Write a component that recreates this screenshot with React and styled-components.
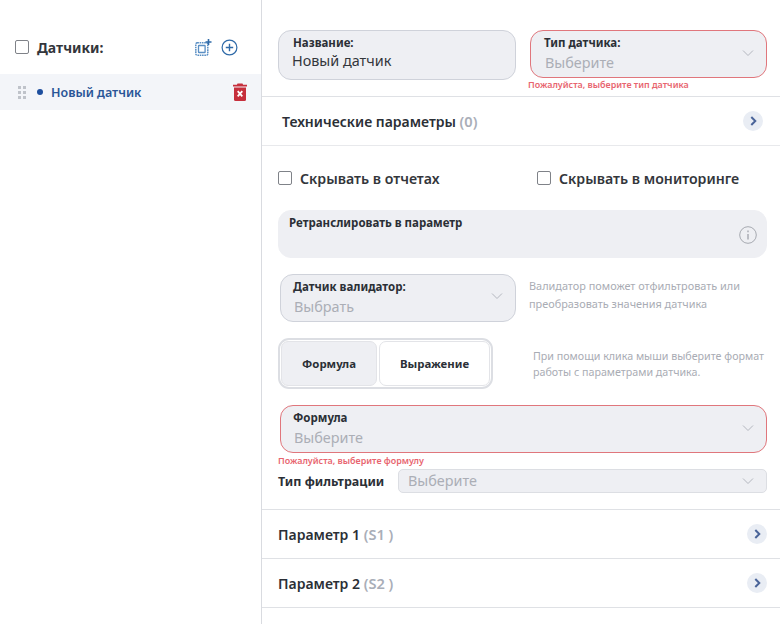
import React from 'react';
import styled, { createGlobalStyle } from 'styled-components';

const GlobalStyle = createGlobalStyle`
  html, body {
    margin: 0;
    padding: 0;
    background: #fff;
    overflow: hidden;
  }
  body {
    font-family: "Noto Sans", "Open Sans", sans-serif;
    color: #2b2f36;
  }
`;

const Page = styled.div`
  display: flex;
  width: 780px;
  height: 624px;
  overflow: hidden;
`;

const Sidebar = styled.aside`
  flex: 0 0 261px;
  border-right: 1px solid #d9dbe0;
  height: 100%;
`;

const SidebarHead = styled.div`
  display: flex;
  align-items: center;
  height: 34px;
  margin-top: 30px;
  padding: 0 23px 0 15px;
`;

const SidebarTitle = styled.span`
  flex: 1;
  margin-left: 8px;
  font-size: 14px;
  font-weight: 700;
  color: #33363b;
`;

const HeadIcons = styled.div`
  display: flex;
  align-items: center;
  gap: 9px;
`;

const SensorRow = styled.div`
  display: flex;
  align-items: center;
  height: 36px;
  margin-top: 10px;
  padding: 0 14px 0 18px;
  background: #f3f5f9;
`;

const Dot = styled.span`
  width: 6px;
  height: 6px;
  margin: 0 8px 0 11px;
  border-radius: 50%;
  background: #1d4e9e;
`;

const SensorName = styled.span`
  flex: 1;
  font-size: 12.5px;
  font-weight: 600;
  color: #2a5597;
`;

const Main = styled.main`
  flex: 1;
  min-width: 0;
`;

const TopFields = styled.div`
  display: flex;
  align-items: flex-start;
  gap: 14px;
  height: 66px;
  padding: 30px 13px 0 16px;
`;

const FieldBox = styled.div`
  position: relative;
  box-sizing: border-box;
  flex: ${(p) => p.$flex || 'none'};
  height: ${(p) => p.$height || '48px'};
  margin-left: ${(p) => p.$offset || '0'};
  padding: ${(p) => p.$padding || '4px 14px'};
  border: 1px solid ${(p) => (p.$error ? '#e0767c' : p.$borderless ? '#eeeff3' : '#cfd2da')};
  border-radius: 13px;
  background: #eeeff3;
`;

const FieldLabel = styled.div`
  font-size: 11.5px;
  line-height: 16px;
  font-weight: 700;
  color: #2b2f36;
`;

const FieldValue = styled.div`
  margin: ${(p) => (p.$placeholder ? '1px 0 0 1px' : '-1px 0 0 -1px')};
  font-size: 14.4px;
  line-height: 21px;
  color: ${(p) => (p.$placeholder ? '#abaeb6' : '#33363b')};
`;

const Chevron = styled.svg`
  position: absolute;
  right: 12px;
  top: ${(p) => p.$top || '18px'};
  width: 12px;
  height: 8px;
  fill: none;
  stroke: #b4b7bf;
  stroke-width: 1;
`;

const ErrorText = styled.div`
  font-size: 8.95px;
  line-height: 12px;
  font-weight: 600;
  color: #e8656f;
  white-space: nowrap;
`;

const TypeColumn = styled.div`
  flex: 0 0 237px;
  min-width: 0;

  ${ErrorText} {
    margin: 1px 0 0 -2px;
  }
`;

const AccordionRow = styled.div`
  display: flex;
  align-items: center;
  justify-content: space-between;
  box-sizing: border-box;
  height: ${(p) => p.$height || '49px'};
  padding: 0 ${(p) => p.$right || '13px'} 0 ${(p) => p.$left || '16px'};
  border-top: 1px solid #dfe1e5;
  font-size: 14px;
  font-weight: 600;
  color: #2b2f36;
`;

const Muted = styled.span`
  font-size: 14.6px;
  color: #a9aeb8;
`;

const RoundArrow = styled.span`
  display: flex;
  align-items: center;
  justify-content: center;
  width: 20px;
  height: 20px;
  border-radius: 50%;
  background: #e9edf4;

  svg {
    width: 7px;
    height: 10px;
    fill: none;
    stroke: #4a6499;
    stroke-width: 2;
  }
`;

const Section = styled.section`
  border-top: 1px solid #e8e9ec;
  padding: 0 13px 16px 16px;
`;

const CheckRow = styled.div`
  display: flex;
  align-items: center;
  height: 64px;
`;

const CheckLabel = styled.label`
  display: flex;
  align-items: center;
  gap: 8px;
  width: ${(p) => p.$width || 'auto'};
  font-size: 14.15px;
  font-weight: 600;
  color: #33363b;
`;

const Box = styled.span`
  box-sizing: border-box;
  width: 14px;
  height: 14px;
  border: 1px solid #7f8288;
  border-radius: 2px;
  background: #fff;
`;

const InfoIcon = styled.svg`
  position: absolute;
  right: 9px;
  top: 15px;
  width: 18px;
  height: 18px;
`;

const HintRow = styled.div`
  display: flex;
  align-items: center;
  margin-top: 16px;
`;

const ValidatorHint = styled.p`
  margin: 0 0 7px 13px;
  font-size: 10.9px;
  line-height: 18px;
  color: #a9acb4;
  white-space: nowrap;
`;

const FormatHint = styled(ValidatorHint)`
  margin: 0 0 0 40px;
  font-size: 10.7px;
  line-height: 16px;
`;

const Toggle = styled.div`
  box-sizing: border-box;
  display: flex;
  gap: 2px;
  width: 215px;
  height: 51px;
  padding: 1px;
  border: 2px solid #dcdee3;
  border-radius: 11px;
`;

const ToggleItem = styled.div`
  box-sizing: border-box;
  display: flex;
  align-items: center;
  justify-content: center;
  flex: ${(p) => (p.$active ? '0 0 96px' : '1')};
  border: 1px solid #e3e4e8;
  border-radius: 7px;
  background: ${(p) => (p.$active ? '#eeeff3' : '#fff')};
  font-size: 11.4px;
  font-weight: 700;
  color: #2b2f36;
`;

const FormulaWrap = styled.div`
  margin-top: 16px;

  ${ErrorText} {
    margin-top: 2px;
  }
`;

const FilterRow = styled.div`
  display: flex;
  align-items: center;
  height: 24px;
  margin-top: 2px;
`;

const FilterLabel = styled.span`
  flex: 0 0 120px;
  font-size: 12.5px;
  font-weight: 700;
  color: #2b2f36;
`;

const FilterSelect = styled.div`
  position: relative;
  box-sizing: border-box;
  flex: 1;
  height: 24px;
  padding-left: 9px;
  border: 1px solid #dcdee3;
  border-radius: 5px;
  background: #eeeff3;
  font-size: 14.4px;
  line-height: 22px;
  color: #abaeb6;
`;

const ChevronDown = ({ $top }) => (
  <Chevron $top={$top} viewBox="0 0 12 8">
    <path d="M1 1.500l5 5 5-5" />
  </Chevron>
);

const Arrow = () => (
  <RoundArrow>
    <svg viewBox="0 0 7 10">
      <path d="M1.300 1l4 4-4 4" />
    </svg>
  </RoundArrow>
);

const App = () => (
  <>
    <GlobalStyle />
    <Page>
      <Sidebar>
        <SidebarHead>
          <Box />
          <SidebarTitle>Датчики:</SidebarTitle>
          <HeadIcons>
            <svg width="17" height="17" viewBox="0 0 17 17" fill="none" stroke="#5a8fc4">
              <rect x="0.800" y="3.800" width="12" height="12.400" rx="1.500" strokeWidth="1.500" strokeDasharray="1.600 0.700" />
              <rect x="3.500" y="6.500" width="6.600" height="7" rx="0.600" strokeWidth="1.300" />
              <path d="M13.500 0v6M10.500 3h6" stroke="#2f6aa8" strokeWidth="1.600" />
            </svg>
            <svg width="17" height="17" viewBox="0 0 17 17" fill="none" stroke="#2f6aa8" strokeWidth="1.200">
              <circle cx="8.500" cy="8.500" r="7.400" />
              <path d="M8.500 4.800v7.400M4.800 8.500h7.400" strokeWidth="1.400" />
            </svg>
          </HeadIcons>
        </SidebarHead>
        <SensorRow>
          <svg width="8" height="13" viewBox="0 0 8 13" fill="#bfc3ca">
            <rect width="3" height="3" />
            <rect x="5" width="3" height="3" />
            <rect y="5" width="3" height="3" />
            <rect x="5" y="5" width="3" height="3" />
            <rect y="10" width="3" height="3" />
            <rect x="5" y="10" width="3" height="3" />
          </svg>
          <Dot />
          <SensorName>Новый датчик</SensorName>
          <svg width="14" height="18" viewBox="0 0 14 18">
            <path d="M4.500 0.500h5l.6 1.200H14v1.800H0V1.700h3.900z" fill="#c62f3c" />
            <path d="M1 4.500h12V16.500a1.500 1.500 0 0 1-1.500 1.500h-9A1.500 1.500 0 0 1 1 16.500z" fill="#c62f3c" />
            <path d="M4.700 8.200l4.600 5.200M9.300 8.200l-4.600 5.200" stroke="#fff" strokeWidth="1.800" />
          </svg>
        </SensorRow>
      </Sidebar>

      <Main>
        <TopFields>
          <FieldBox $height="50px" $flex="0 0 238px">
            <FieldLabel>Название:</FieldLabel>
            <FieldValue>Новый датчик</FieldValue>
          </FieldBox>
          <TypeColumn>
            <FieldBox $error $padding="4px 13px">
              <FieldLabel>Тип датчика:</FieldLabel>
              <FieldValue $placeholder>Выберите</FieldValue>
              <ChevronDown />
            </FieldBox>
            <ErrorText>Пожалуйста, выберите тип датчика</ErrorText>
          </TypeColumn>
        </TopFields>

        <AccordionRow $left="20px" $right="17px">
          <span>Технические параметры <Muted>(0)</Muted></span>
          <Arrow />
        </AccordionRow>

        <Section>
          <CheckRow>
            <CheckLabel $width="259px"><Box />Скрывать в отчетах</CheckLabel>
            <CheckLabel><Box />Скрывать в мониторинге</CheckLabel>
          </CheckRow>

          <FieldBox $borderless $padding="4px 10px">
            <FieldLabel>Ретранслировать в параметр</FieldLabel>
            <InfoIcon viewBox="0 0 18 18" fill="none" stroke="#a6a9b0">
              <circle cx="9" cy="9" r="8.300" />
              <path d="M9 8v5.500M9 4.500v1.800" strokeWidth="1.400" />
            </InfoIcon>
          </FieldBox>

          <HintRow>
            <FieldBox $flex="0 0 236px" $offset="2px" $padding="4px 12px">
              <FieldLabel>Датчик валидатор:</FieldLabel>
              <FieldValue $placeholder>Выбрать</FieldValue>
              <ChevronDown $top="17px" />
            </FieldBox>
            <ValidatorHint>Валидатор поможет отфильтровать или<br />преобразовать значения датчика</ValidatorHint>
          </HintRow>

          <HintRow>
            <Toggle>
              <ToggleItem $active>Формула</ToggleItem>
              <ToggleItem>Выражение</ToggleItem>
            </Toggle>
            <FormatHint>При помощи клика мыши выберите формат<br />работы с параметрами датчика.</FormatHint>
          </HintRow>

          <FormulaWrap>
            <FieldBox $error $offset="2px" $padding="4px 12px">
              <FieldLabel>Формула</FieldLabel>
              <FieldValue $placeholder>Выберите</FieldValue>
              <ChevronDown />
            </FieldBox>
            <ErrorText>Пожалуйста, выберите формулу</ErrorText>
          </FormulaWrap>

          <FilterRow>
            <FilterLabel>Тип фильтрации</FilterLabel>
            <FilterSelect>
              Выберите
              <ChevronDown $top="7px" />
            </FilterSelect>
          </FilterRow>
        </Section>

        <AccordionRow>
          <span>Параметр 1 <Muted>(S1 )</Muted></span>
          <Arrow />
        </AccordionRow>
        <AccordionRow>
          <span>Параметр 2 <Muted>(S2 )</Muted></span>
          <Arrow />
        </AccordionRow>
        <AccordionRow />
      </Main>
    </Page>
  </>
);

export default App;
